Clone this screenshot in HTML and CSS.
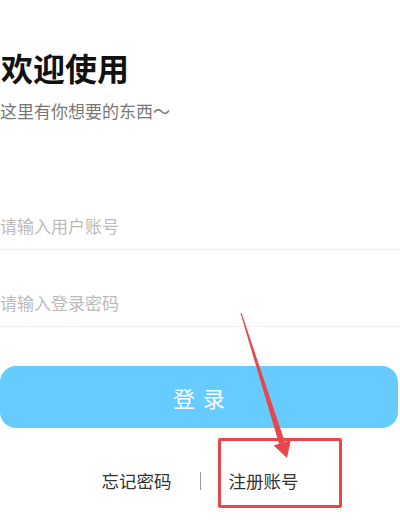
FILE: index.html
```html
<!DOCTYPE html>
<html lang="zh-CN">
<head>
    <meta charset="UTF-8">
    <meta name="viewport" content="width=device-width, initial-scale=1.0">
    <title>登录</title>
    <link rel="stylesheet" href="styles.css">
</head>
<body>
    <div id="wrap">
        <h1 class="title">欢迎使用</h1>
        <p class="sub">这里有你想要的东西～</p>
        <div class="form">
            <div class="field"><input type="text" placeholder="请输入用户账号"></div>
            <div class="field"><input type="password" placeholder="请输入登录密码"></div>
            <button class="login-btn">登录</button>
        </div>
        <div class="links">
            <span>忘记密码</span>
            <i class="sep"></i>
            <span>注册账号</span>
        </div>
    </div>
    <!-- 标注: 红框 + 箭头 -->
    <div class="mark"></div>
    <svg class="arrow" width="400" height="530" viewBox="0 0 400 530">
        <polygon points="240.5,313.2 241.5,312.8 284.9,442.1 279.1,443.9" fill="#e8474a"/>
        <polygon points="273.6,445.4 290.8,440 287,458" fill="#e8474a"/>
    </svg>
</body>
</html>
```

FILE: styles.css
```css
*{margin: 0; padding: 0; box-sizing: border-box;}
body {
    width: 400px;
    height: 530px;
    background: #fff;
    font-family: "Noto Sans CJK SC", "Noto Sans", sans-serif;
    position: relative;
    overflow: hidden;
}
#wrap {
    width: 100%;
    padding-top: 51px;
}
.title {
    font-size: 32px;
    line-height: 32px;
    font-weight: bold;
    color: #111;
    padding-left: 1px;
}
.sub {
    margin-top: 19px;
    font-size: 17px;
    line-height: 17px;
    color: #777;
}
.form {
    margin-top: 82px;
}
.field {
    border-bottom: 1px solid #eee;
}
.field + .field {
    margin-top: 28px;
}
.field input {
    display: block;
    width: 100%;
    height: 48px;
    border: none;
    outline: none;
    font-family: inherit;
    font-size: 17px;
    color: #333;
    background: transparent;
}
.field input::placeholder {
    color: #bbb;
}
.login-btn {
    display: block;
    width: 398px;
    height: 62px;
    margin-top: 39px;
    border: none;
    border-radius: 16px;
    background: #66cbff;
    color: #fff;
    font-family: inherit;
    font-size: 22px;
    letter-spacing: 8px;
    text-indent: 8px;
}
.links {
    margin-top: 44px;
    display: flex;
    justify-content: center;
    align-items: center;
    gap: 28px;
    font-size: 17.5px;
    line-height: 18px;
    color: #333;
}
.sep {
    display: block;
    width: 1px;
    height: 18px;
    background: #999;
}
.mark {
    position: absolute;
    left: 218px;
    top: 438px;
    width: 124px;
    height: 70px;
    border: 3px solid #e8474a;
    border-radius: 2px;
}
.arrow {
    position: absolute;
    left: 0;
    top: 0;
    pointer-events: none;
}
```
